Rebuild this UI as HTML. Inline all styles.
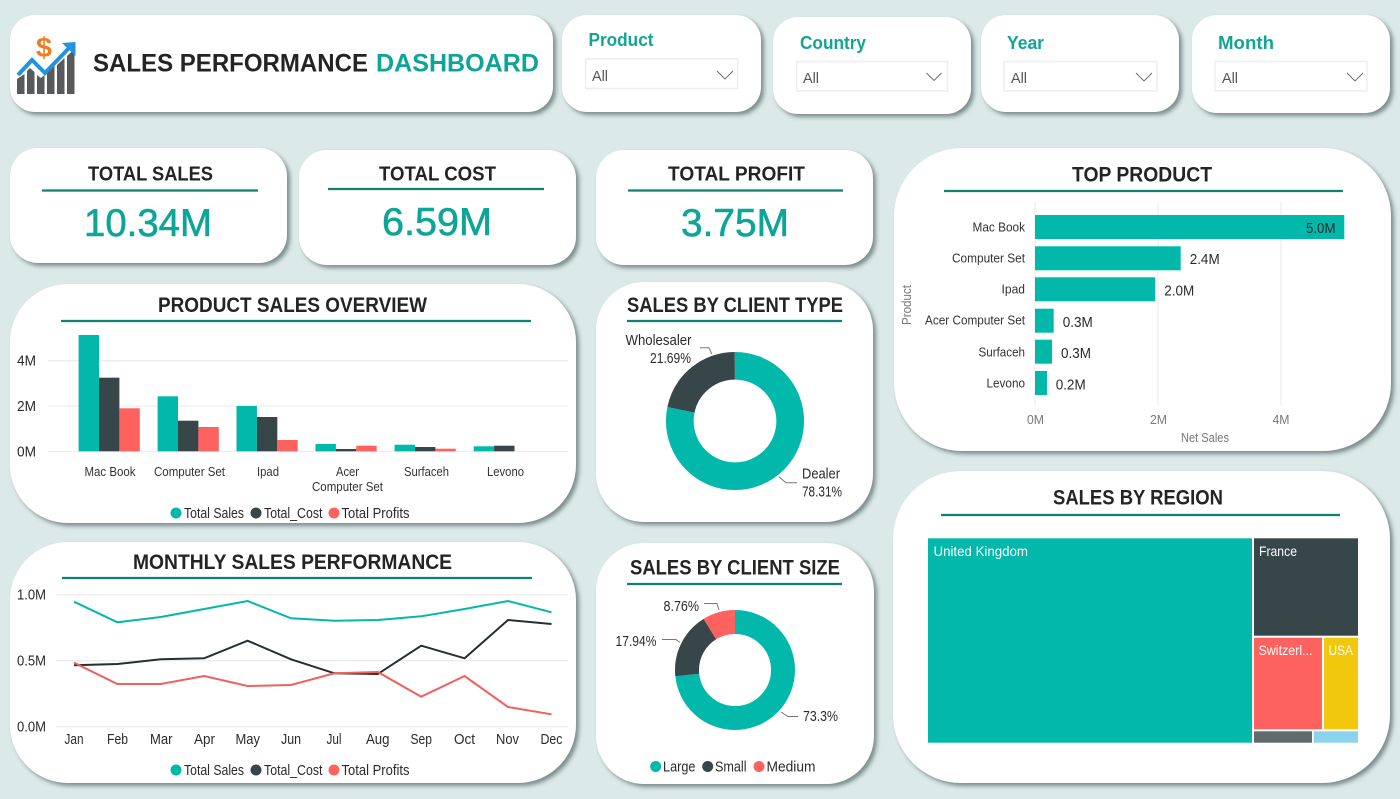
<!DOCTYPE html>
<html lang="en"><head><meta charset="utf-8"><title>Sales Performance Dashboard</title>
<style>
html,body{margin:0;padding:0;background:#dce9e9;width:1400px;height:799px;overflow:hidden}
.c{position:absolute;background:#fff;box-shadow:3px 3px 4px rgba(60,80,80,.6)}
svg{position:absolute;left:0;top:0}
text{font-family:"Liberation Sans",sans-serif;fill:#2b2b2b}
.t{font-weight:700;font-size:21px;fill:#252423}
.k{font-weight:700;font-size:20px;fill:#252423}
.v{font-size:39px;fill:#0ca597;stroke:#0ca597;stroke-width:.6px}
.s{font-weight:700;font-size:18px;fill:#12a594}
.a{font-size:15px;fill:#555}
.l{font-size:13px;fill:#333}
.g{font-size:13px;fill:#777}
.m{font-size:14.5px;fill:#2b2b2b}
.w{font-size:14px;fill:#fff}
.ln{stroke:#0f7f78;stroke-width:2.2}
.gr{stroke:#ededed;stroke-width:1.3}
.ld{stroke:#777;stroke-width:1;fill:none}
.sl{fill:#fff;stroke:#eeeeee;stroke-width:1.5}
.ch{fill:none;stroke:#666;stroke-width:.9}
</style></head><body>
<div class="c" style="left:10px;top:15px;width:543px;height:97px;border-radius:25px"></div>
<div class="c" style="left:562px;top:15px;width:199px;height:97px;border-radius:25px"></div>
<div class="c" style="left:773px;top:17px;width:198px;height:97px;border-radius:25px"></div>
<div class="c" style="left:981px;top:15px;width:198px;height:97px;border-radius:25px"></div>
<div class="c" style="left:1192px;top:15px;width:198px;height:98px;border-radius:25px"></div>
<div class="c" style="left:10px;top:148px;width:277px;height:115px;border-radius:28px"></div>
<div class="c" style="left:299px;top:150px;width:277px;height:115px;border-radius:28px"></div>
<div class="c" style="left:596px;top:150px;width:277px;height:115px;border-radius:28px"></div>
<div class="c" style="left:894px;top:148px;width:497px;height:303px;border-radius:68px"></div>
<div class="c" style="left:10px;top:284px;width:566px;height:239px;border-radius:58px"></div>
<div class="c" style="left:596px;top:282px;width:277px;height:240px;border-radius:48px"></div>
<div class="c" style="left:10px;top:542px;width:566px;height:241px;border-radius:58px"></div>
<div class="c" style="left:596px;top:543px;width:278px;height:241px;border-radius:48px"></div>
<div class="c" style="left:893px;top:471px;width:497px;height:312px;border-radius:68px"></div>

<svg width="1400" height="799" viewBox="0 0 1400 799" xmlns="http://www.w3.org/2000/svg">
<!-- logo -->
<path fill="#58595b" d="M17 79l7.500-5v20H17zM27 71l3-3 4.500 4v22H27zM37 75l4 3 3.500-3v19H37zM47 72l7.500-6v28H47zM57 65l7.500-7v36H57zM67 56l7.500-7v45H67z"/>
<path d="M18 75 L32 60 L45 73 L70 47" fill="none" stroke="#2293dc" stroke-width="4"/>
<path d="M62 43 L75.500 42 L75.500 56 Z" fill="#2293dc"/>
<text x="36" y="57" style="font-size:28px;font-weight:700;fill:#ee7d22" textLength="16" lengthAdjust="spacingAndGlyphs">$</text>
<text x="93" y="71.500" style="font-size:25px;font-weight:700;fill:#252423" textLength="275" lengthAdjust="spacingAndGlyphs">SALES PERFORMANCE</text>
<text x="376" y="71.500" style="font-size:25px;font-weight:700;fill:#0ca597" textLength="163" lengthAdjust="spacingAndGlyphs">DASHBOARD</text>

<!-- slicers -->
<text class="s" x="588.500" y="46" textLength="65" lengthAdjust="spacingAndGlyphs">Product</text>
<rect class="sl" x="585.700" y="59" width="152" height="29.500"/>
<text class="a" x="592" y="81" textLength="16" lengthAdjust="spacingAndGlyphs">All</text>
<path class="ch" d="M717 71l8 8 8-8"/>
<text class="s" x="800" y="49" textLength="66" lengthAdjust="spacingAndGlyphs">Country</text>
<rect class="sl" x="796.700" y="61.500" width="151" height="29.500"/>
<text class="a" x="803" y="83" textLength="16" lengthAdjust="spacingAndGlyphs">All</text>
<path class="ch" d="M926.500 73l7.500 7.500 7.500-7.500"/>
<text class="s" x="1007" y="49" textLength="37" lengthAdjust="spacingAndGlyphs">Year</text>
<rect class="sl" x="1004" y="61.500" width="153" height="29.500"/>
<text class="a" x="1011" y="83" textLength="16" lengthAdjust="spacingAndGlyphs">All</text>
<path class="ch" d="M1136 73l8 8 8-8"/>
<text class="s" x="1218" y="49" textLength="56" lengthAdjust="spacingAndGlyphs">Month</text>
<rect class="sl" x="1215" y="61.500" width="152" height="29.500"/>
<text class="a" x="1222" y="83" textLength="16" lengthAdjust="spacingAndGlyphs">All</text>
<path class="ch" d="M1347 73l8 8 8-8"/>

<!-- KPI -->
<text class="k" x="88" y="180.500" textLength="125" lengthAdjust="spacingAndGlyphs">TOTAL SALES</text>
<line class="ln" x1="42" x2="258" y1="190.500" y2="190.500"/>
<text class="v" x="84" y="236" textLength="128" lengthAdjust="spacingAndGlyphs">10.34M</text>
<text class="k" x="379" y="180.500" textLength="117" lengthAdjust="spacingAndGlyphs">TOTAL COST</text>
<line class="ln" x1="328" x2="544" y1="189" y2="189"/>
<text class="v" x="382" y="235" textLength="110" lengthAdjust="spacingAndGlyphs">6.59M</text>
<text class="k" x="668" y="180.500" textLength="137" lengthAdjust="spacingAndGlyphs">TOTAL PROFIT</text>
<line class="ln" x1="628" x2="843" y1="190.500" y2="190.500"/>
<text class="v" x="681" y="236" textLength="108" lengthAdjust="spacingAndGlyphs">3.75M</text>

<!-- Product sales overview -->
<text class="t" x="158" y="312" textLength="269" lengthAdjust="spacingAndGlyphs">PRODUCT SALES OVERVIEW</text>
<line class="ln" x1="61" x2="531" y1="321" y2="321"/>
<line class="gr" x1="48" x2="568" y1="360.700" y2="360.700"/>
<line class="gr" x1="48" x2="568" y1="406" y2="406"/>
<line class="gr" x1="48" x2="568" y1="451.500" y2="451.500"/>
<text class="m" x="17" y="365.500" textLength="19" lengthAdjust="spacingAndGlyphs">4M</text>
<text class="m" x="17" y="411" textLength="19" lengthAdjust="spacingAndGlyphs">2M</text>
<text class="m" x="17" y="456.500" textLength="19" lengthAdjust="spacingAndGlyphs">0M</text>
<g fill="#01b8aa">
<rect x="78.600" y="335" width="20.400" height="116.300"/><rect x="157.600" y="396.300" width="20.400" height="55"/><rect x="236.500" y="406" width="20.400" height="45.300"/><rect x="315.500" y="444" width="20.400" height="7.300"/><rect x="394.600" y="444.700" width="20.400" height="6.600"/><rect x="473.700" y="446.300" width="20.400" height="5"/>
</g>
<g fill="#374649">
<rect x="99" y="377.700" width="20.400" height="73.600"/><rect x="178" y="420.700" width="20.400" height="30.600"/><rect x="256.900" y="417" width="20.400" height="34.300"/><rect x="335.900" y="449" width="20.400" height="2.300"/><rect x="415" y="447" width="20.400" height="4.300"/><rect x="494.100" y="445.700" width="20.400" height="5.600"/>
</g>
<g fill="#fd625e">
<rect x="119.400" y="408.300" width="20.400" height="43"/><rect x="198.400" y="427" width="20.400" height="24.300"/><rect x="277.300" y="440" width="20.400" height="11.300"/><rect x="356.300" y="445.700" width="20.400" height="5.600"/><rect x="435.400" y="448.700" width="20.400" height="2.600"/>
</g>
<text class="l" x="84.500" y="476" textLength="51" lengthAdjust="spacingAndGlyphs">Mac Book</text>
<text class="l" x="154" y="476" textLength="71" lengthAdjust="spacingAndGlyphs">Computer Set</text>
<text class="l" x="257" y="476" textLength="22" lengthAdjust="spacingAndGlyphs">Ipad</text>
<text class="l" x="336" y="476" textLength="23" lengthAdjust="spacingAndGlyphs">Acer</text>
<text class="l" x="312" y="491" textLength="71" lengthAdjust="spacingAndGlyphs">Computer Set</text>
<text class="l" x="404" y="476" textLength="45" lengthAdjust="spacingAndGlyphs">Surfaceh</text>
<text class="l" x="487" y="476" textLength="37" lengthAdjust="spacingAndGlyphs">Levono</text>
<circle cx="176" cy="513" r="5.500" fill="#01b8aa"/><text class="m" x="184" y="518" textLength="60" lengthAdjust="spacingAndGlyphs">Total Sales</text>
<circle cx="256" cy="513" r="5.500" fill="#374649"/><text class="m" x="264" y="518" textLength="58.500" lengthAdjust="spacingAndGlyphs">Total_Cost</text>
<circle cx="334" cy="513" r="5.500" fill="#fd625e"/><text class="m" x="341.500" y="518" textLength="68" lengthAdjust="spacingAndGlyphs">Total Profits</text>

<!-- Monthly -->
<text class="t" x="133" y="569" textLength="319" lengthAdjust="spacingAndGlyphs">MONTHLY SALES PERFORMANCE</text>
<line class="ln" x1="62" x2="532" y1="578" y2="578"/>
<line class="gr" x1="56" x2="568" y1="594.700" y2="594.700"/>
<line class="gr" x1="56" x2="568" y1="660.700" y2="660.700"/>
<line class="gr" x1="56" x2="568" y1="726.700" y2="726.700"/>
<text class="m" x="17" y="599.500" textLength="29" lengthAdjust="spacingAndGlyphs">1.0M</text>
<text class="m" x="17" y="665.500" textLength="29" lengthAdjust="spacingAndGlyphs">0.5M</text>
<text class="m" x="17" y="731.500" textLength="29" lengthAdjust="spacingAndGlyphs">0.0M</text>
<polyline fill="none" stroke="#01b8aa" stroke-width="2" points="74,601.700 117.400,622.300 160.800,617 204.200,609 247.600,601 291,618.300 334.400,620.700 377.800,620 421.200,616.300 464.600,609 508,601 551.500,612.300"/>
<polyline fill="none" stroke="#252f31" stroke-width="2" points="74,665.300 117.400,664 160.800,659.300 204.200,658.300 247.600,640.700 291,659.300 334.400,673.300 377.800,674 421.200,645.700 464.600,658.300 508,620 551.500,624"/>
<polyline fill="none" stroke="#f0605c" stroke-width="2" points="74,662.700 117.400,684 160.800,684 204.200,676 247.600,686 291,685 334.400,673.300 377.800,672 421.200,696.700 464.600,676 508,707 551.500,714.300"/>
<text class="m" x="64.500" y="744" textLength="19" lengthAdjust="spacingAndGlyphs">Jan</text>
<text class="m" x="107" y="744" textLength="21" lengthAdjust="spacingAndGlyphs">Feb</text>
<text class="m" x="150" y="744" textLength="22.500" lengthAdjust="spacingAndGlyphs">Mar</text>
<text class="m" x="194" y="744" textLength="21" lengthAdjust="spacingAndGlyphs">Apr</text>
<text class="m" x="235.500" y="744" textLength="24.500" lengthAdjust="spacingAndGlyphs">May</text>
<text class="m" x="281" y="744" textLength="20" lengthAdjust="spacingAndGlyphs">Jun</text>
<text class="m" x="326.500" y="744" textLength="15" lengthAdjust="spacingAndGlyphs">Jul</text>
<text class="m" x="366" y="744" textLength="23.500" lengthAdjust="spacingAndGlyphs">Aug</text>
<text class="m" x="410.500" y="744" textLength="21.500" lengthAdjust="spacingAndGlyphs">Sep</text>
<text class="m" x="454" y="744" textLength="21" lengthAdjust="spacingAndGlyphs">Oct</text>
<text class="m" x="496" y="744" textLength="23" lengthAdjust="spacingAndGlyphs">Nov</text>
<text class="m" x="540.500" y="744" textLength="22" lengthAdjust="spacingAndGlyphs">Dec</text>
<circle cx="176" cy="770" r="5.500" fill="#01b8aa"/><text class="m" x="184" y="775" textLength="60" lengthAdjust="spacingAndGlyphs">Total Sales</text>
<circle cx="256" cy="770" r="5.500" fill="#374649"/><text class="m" x="264" y="775" textLength="58.500" lengthAdjust="spacingAndGlyphs">Total_Cost</text>
<circle cx="334" cy="770" r="5.500" fill="#fd625e"/><text class="m" x="341.500" y="775" textLength="68" lengthAdjust="spacingAndGlyphs">Total Profits</text>

<!-- Client type -->
<text class="t" x="627" y="312" textLength="216" lengthAdjust="spacingAndGlyphs">SALES BY CLIENT TYPE</text>
<line class="ln" x1="627" x2="842" y1="321" y2="321"/>
<g transform="rotate(-90 735 421)" fill="none" stroke-width="27.700">
<circle cx="735" cy="421" r="55.200" stroke="#01b8aa" pathLength="100" stroke-dasharray="78.310 21.690"/>
<circle cx="735" cy="421" r="55.200" stroke="#374649" pathLength="100" stroke-dasharray="21.690 78.310" stroke-dashoffset="-78.310"/>
</g>
<path class="ld" d="M700 347.700H709L711.700 354"/>
<path class="ld" d="M779 476.700L786 482.700H797"/>
<text class="m" x="625.500" y="345" textLength="66" lengthAdjust="spacingAndGlyphs">Wholesaler</text>
<text class="m" x="650" y="363" textLength="41" lengthAdjust="spacingAndGlyphs">21.69%</text>
<text class="m" x="802" y="478.500" textLength="38" lengthAdjust="spacingAndGlyphs">Dealer</text>
<text class="m" x="802" y="496.500" textLength="40" lengthAdjust="spacingAndGlyphs">78.31%</text>

<!-- Client size -->
<text class="t" x="630" y="574.500" textLength="210" lengthAdjust="spacingAndGlyphs">SALES BY CLIENT SIZE</text>
<line class="ln" x1="627" x2="842" y1="584" y2="584"/>
<g transform="rotate(-90 735 670)" fill="none" stroke-width="24">
<circle cx="735" cy="670" r="48" stroke="#01b8aa" pathLength="100" stroke-dasharray="73.300 26.700"/>
<circle cx="735" cy="670" r="48" stroke="#374649" pathLength="100" stroke-dasharray="17.940 82.060" stroke-dashoffset="-73.300"/>
<circle cx="735" cy="670" r="48" stroke="#fd625e" pathLength="100" stroke-dasharray="8.760 91.240" stroke-dashoffset="-91.240"/>
</g>
<path class="ld" d="M704 603.500H717L719 610"/>
<path class="ld" d="M662 639.500H676L680 642.500"/>
<path class="ld" d="M781 712L788 716.500H798"/>
<text class="m" x="663.500" y="611" textLength="35.500" lengthAdjust="spacingAndGlyphs">8.76%</text>
<text class="m" x="615.500" y="646" textLength="41" lengthAdjust="spacingAndGlyphs">17.94%</text>
<text class="m" x="803" y="721" textLength="35" lengthAdjust="spacingAndGlyphs">73.3%</text>
<circle cx="655.700" cy="766.500" r="5.500" fill="#01b8aa"/><text class="m" x="663" y="771.500" textLength="32.500" lengthAdjust="spacingAndGlyphs">Large</text>
<circle cx="707.700" cy="766.500" r="5.500" fill="#374649"/><text class="m" x="715" y="771.500" textLength="31.500" lengthAdjust="spacingAndGlyphs">Small</text>
<circle cx="759" cy="766.500" r="5.500" fill="#fd625e"/><text class="m" x="766.500" y="771.500" textLength="49" lengthAdjust="spacingAndGlyphs">Medium</text>

<!-- Top product -->
<text class="t" x="1072" y="181.500" textLength="140" lengthAdjust="spacingAndGlyphs">TOP PRODUCT</text>
<line class="ln" x1="944" x2="1343" y1="191" y2="191"/>
<line class="gr" x1="1035" x2="1035" y1="202" y2="405"/>
<line class="gr" x1="1158" x2="1158" y1="202" y2="405"/>
<line class="gr" x1="1281" x2="1281" y1="202" y2="405"/>
<g fill="#01b8aa">
<rect x="1035" y="215" width="309.300" height="24"/>
<rect x="1035" y="246.300" width="145.700" height="24"/>
<rect x="1035" y="277.300" width="120.300" height="24"/>
<rect x="1035" y="308.700" width="18.700" height="24"/>
<rect x="1035" y="339.700" width="17" height="24"/>
<rect x="1035" y="371" width="12" height="24"/>
</g>
<text class="l" x="972.500" y="231.500" textLength="52.500" lengthAdjust="spacingAndGlyphs">Mac Book</text>
<text class="l" x="952" y="262.500" textLength="73" lengthAdjust="spacingAndGlyphs">Computer Set</text>
<text class="l" x="1001.500" y="293.500" textLength="23.500" lengthAdjust="spacingAndGlyphs">Ipad</text>
<text class="l" x="925" y="324.500" textLength="100" lengthAdjust="spacingAndGlyphs">Acer Computer Set</text>
<text class="l" x="978.500" y="356.500" textLength="46.500" lengthAdjust="spacingAndGlyphs">Surfaceh</text>
<text class="l" x="986.500" y="387.500" textLength="38.500" lengthAdjust="spacingAndGlyphs">Levono</text>
<text class="m" x="1306" y="233" textLength="29.500" lengthAdjust="spacingAndGlyphs">5.0M</text>
<text class="m" x="1189.700" y="264" textLength="30" lengthAdjust="spacingAndGlyphs">2.4M</text>
<text class="m" x="1164.300" y="295.500" textLength="30" lengthAdjust="spacingAndGlyphs">2.0M</text>
<text class="m" x="1062.700" y="327" textLength="30" lengthAdjust="spacingAndGlyphs">0.3M</text>
<text class="m" x="1061" y="358" textLength="30" lengthAdjust="spacingAndGlyphs">0.3M</text>
<text class="m" x="1055.700" y="389.500" textLength="30" lengthAdjust="spacingAndGlyphs">0.2M</text>
<text class="g" x="1027" y="424" textLength="17" lengthAdjust="spacingAndGlyphs">0M</text>
<text class="g" x="1150" y="424" textLength="17" lengthAdjust="spacingAndGlyphs">2M</text>
<text class="g" x="1272.500" y="424" textLength="17" lengthAdjust="spacingAndGlyphs">4M</text>
<text class="g" x="1181" y="442" textLength="48" lengthAdjust="spacingAndGlyphs">Net Sales</text>
<text class="g" transform="translate(911 325) rotate(-90)" x="0" y="0" textLength="40" lengthAdjust="spacingAndGlyphs">Product</text>

<!-- Region -->
<text class="t" x="1053" y="504.500" textLength="170" lengthAdjust="spacingAndGlyphs">SALES BY REGION</text>
<line class="ln" x1="941" x2="1340" y1="515" y2="515"/>
<rect x="928" y="538.300" width="324" height="204.400" fill="#01b8aa"/>
<rect x="1254" y="538.300" width="104" height="97.400" fill="#374649"/>
<rect x="1254" y="637.700" width="68" height="91.600" fill="#fd625e"/>
<rect x="1324" y="637.700" width="34" height="91.600" fill="#f2c80f"/>
<rect x="1254" y="731.300" width="58" height="11.400" fill="#5f6b6d"/>
<rect x="1313.700" y="731.300" width="44.300" height="11.400" fill="#8ad4eb"/>
<text class="w" x="933.500" y="556" textLength="94.500" lengthAdjust="spacingAndGlyphs">United Kingdom</text>
<text class="w" x="1259" y="556" textLength="38" lengthAdjust="spacingAndGlyphs">France</text>
<text class="w" x="1258.500" y="655" textLength="54" lengthAdjust="spacingAndGlyphs">Switzerl...</text>
<text class="w" x="1328.500" y="655" textLength="24.500" lengthAdjust="spacingAndGlyphs">USA</text>
</svg>
</body></html>
